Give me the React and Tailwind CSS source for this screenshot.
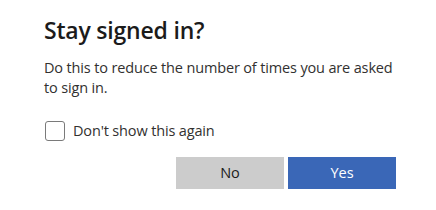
export default function App() {
  return (
    <div className="relative h-[210px] w-[436px] overflow-hidden bg-white font-['Open_Sans',sans-serif] text-[#1b1b1b]">
      <div className="ml-[44px] w-[352px] pt-[14px]">
        <h1 className="text-[23px] font-semibold leading-[32px] tracking-[-0.2px]">Stay signed in?</h1>
        <p className="mt-[12px] text-[14.5px] leading-[20px] tracking-[-0.15px] text-[#323130]">
          Do this to reduce the number of times you are asked to sign in.
        </p>
        <label className="mt-[23px] flex items-center">
          <span className="ml-px h-[20px] w-[20px] rounded-[3px] border border-[#7a7a7a]" />
          <span className="ml-[8px] text-[14.5px] leading-[20px] tracking-[-0.15px] text-[#323130]">
            Don't show this again
          </span>
        </label>
        <div className="mt-[16px] flex justify-end gap-[4px]">
          <button className="h-[32px] w-[108px] bg-[#cccccc] text-[14.5px] text-[#1b1b1b]">No</button>
          <button className="h-[32px] w-[108px] bg-[#3a67b7] text-[14.5px] text-white">Yes</button>
        </div>
      </div>
    </div>
  );
}
